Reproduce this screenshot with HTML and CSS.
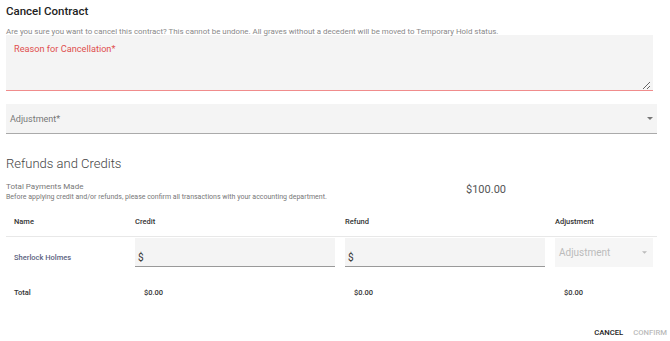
FILE: index.html
```html
<!DOCTYPE html>
<html lang="en">
<head>
    <meta charset="UTF-8">
    <meta name="viewport" content="width=device-width, initial-scale=1.0">
    <title>Cancel Contract</title>
    <link rel="stylesheet" href="styles.css">
</head>
<body>
    <div class="dialog">
        <h2 class="titulo">Cancel Contract</h2>
        <p class="aviso">Are you sure you want to cancel this contract? This cannot be undone. All graves without a decedent will be moved to Temporary Hold status.</p>

        <div class="campo campo-area">
            <label for="razon" class="etiqueta-error">Reason for Cancellation*</label>
            <textarea id="razon" name="razon"></textarea>
        </div>

        <div class="campo campo-select">
            <span class="etiqueta">Adjustment*</span>
            <svg class="flecha" width="6" height="3" viewBox="0 0 6 3"><path d="M0 0h6L3 3z" fill="#777"/></svg>
        </div>

        <h3 class="subtitulo">Refunds and Credits</h3>

        <div class="pagos">
            <div>
                <div class="pagos-titulo">Total Payments Made</div>
                <div class="pagos-nota">Before applying credit and/or refunds, please confirm all transactions with your accounting department.</div>
            </div>
            <div class="pagos-monto">$100.00</div>
        </div>

        <div class="tabla">
            <div class="fila fila-cabecera">
                <div class="celda">Name</div>
                <div class="celda">Credit</div>
                <div class="celda">Refund</div>
                <div class="celda">Adjustment</div>
            </div>
            <div class="fila fila-datos">
                <div class="celda nombre">Sherlock Holmes</div>
                <div class="celda"><div class="monto-input">$</div></div>
                <div class="celda"><div class="monto-input">$</div></div>
                <div class="celda">
                    <div class="ajuste-select">
                        <span>Adjustment</span>
                        <svg width="5" height="3" viewBox="0 0 6 3"><path d="M0 0h6L3 3z" fill="#bbb"/></svg>
                    </div>
                </div>
            </div>
            <div class="fila fila-total">
                <div class="celda">Total</div>
                <div class="celda valor">$0.00</div>
                <div class="celda valor">$0.00</div>
                <div class="celda valor">$0.00</div>
            </div>
        </div>

        <div class="acciones">
            <button class="boton">CANCEL</button>
            <button class="boton boton-off">CONFIRM</button>
        </div>
    </div>
</body>
</html>
```

FILE: styles.css
```css
body {
    margin: 0;
    font-family: Roboto, "Liberation Sans", sans-serif;
    color: #333;
    background: #fff;
}
.dialog {
    padding: 4px 13px 0 6px;
}
.titulo {
    margin: 0;
    font-size: 11.5px;
    font-weight: 500;
    line-height: 14px;
    color: #222;
}
.aviso {
    margin: 9px 0 0;
    font-size: 7.9px;
    line-height: 10px;
    color: #888;
}
.campo {
    background: #f4f4f4;
    box-sizing: border-box;
}
.campo-area {
    margin-top: -2px;
    width: 647px;
    height: 56px;
    padding: 8px 8px 0;
    border-bottom: 1px solid #f08c8c;
    display: flex;
    flex-direction: column;
}
.etiqueta-error {
    font-size: 9.2px;
    line-height: 12px;
    color: #e0504f;
}
.campo-area textarea {
    flex: 1;
    border: none;
    background: transparent;
    resize: vertical;
    outline: none;
    margin: 0 -6px 0 0;
    padding: 0;
}
.campo-select {
    margin-top: 13px;
    height: 30px;
    padding: 0 4px 0 4px;
    border-bottom: 1px solid #aaa;
    display: flex;
    align-items: center;
    justify-content: space-between;
}
.etiqueta {
    font-size: 9px;
    color: #777;
}
.subtitulo {
    margin: 21px 0 0;
    font-size: 13px;
    font-weight: 300;
    line-height: 17px;
    color: #444;
}
.pagos {
    margin-top: 9px;
    display: grid;
    grid-template-columns: 460px auto;
    align-items: center;
}
.pagos-titulo {
    font-size: 8px;
    line-height: 11px;
    color: #777;
}
.pagos-nota {
    font-size: 7px;
    line-height: 10px;
    color: #777;
}
.pagos-monto {
    margin-top: -5px;
    font-size: 11px;
    color: #555;
}
.tabla {
    margin-top: 4px;
}
.fila {
    display: grid;
    grid-template-columns: 121px 210px 210px 1fr;
    align-items: center;
}
.celda {
    padding: 0 2px 0 8px;
    font-size: 7.5px;
    font-weight: 500;
    color: #333;
}
.fila-cabecera {
    height: 30px;
    border-bottom: 1px solid #e8e8e8;
}
.fila-datos {
    height: 30px;
}
.nombre {
    padding-top: 11px;
    color: #5b6380;
}
.monto-input {
    height: 29px;
    background: #f4f4f4;
    border-bottom: 1px solid #999;
    box-sizing: border-box;
    display: flex;
    align-items: center;
    padding: 12px 0 0 3px;
    font-size: 10px;
    font-weight: 400;
    color: #333;
}
.ajuste-select {
    width: 98px;
    height: 29px;
    background: #f6f6f6;
    box-sizing: border-box;
    display: flex;
    align-items: center;
    justify-content: space-between;
    padding: 0 6px 0 4px;
    font-size: 10px;
    font-weight: 400;
    color: #bbb;
}
.fila-total {
    height: 51px;
}
.valor {
    padding-left: 17px;
}
.acciones {
    display: flex;
    justify-content: flex-end;
    gap: 10px;
    margin-right: -10px;
    margin-top: 6px;
}
.boton {
    border: none;
    background: none;
    padding: 4px 0;
    font-family: Roboto, "Liberation Sans", sans-serif;
    font-size: 7.7px;
    font-weight: 500;
    color: #222;
}
.boton-off {
    color: #bbb;
}
```
